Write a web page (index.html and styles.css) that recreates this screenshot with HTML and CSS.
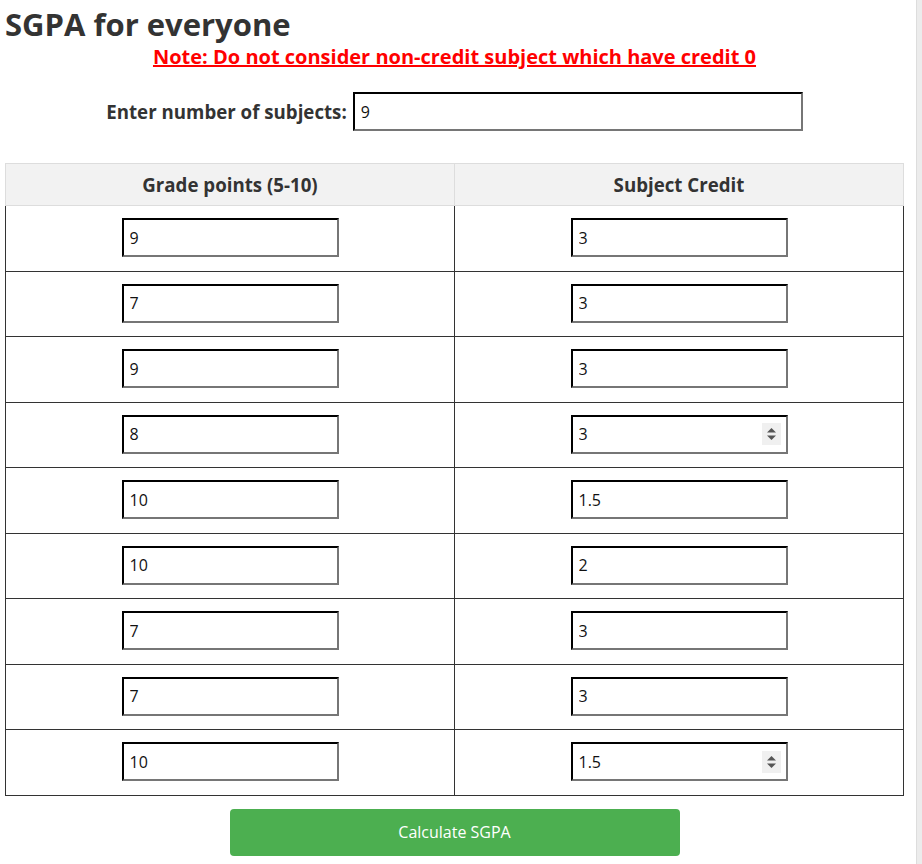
FILE: index.html
```html
<!DOCTYPE html>
<html lang="en">
<head>
    <meta charset="UTF-8">
    <meta name="viewport" content="width=device-width, initial-scale=1.0">
    <title>SGPA Calculator</title>
    <link rel="stylesheet" href="styles.css">
</head>
<body>
    <div class="container">
        <h1>SGPA for everyone</h1>
        <p class="note">Note: Do not consider non-credit subject which have credit 0</p>

        <div class="count-row">
            <label for="count">Enter number of subjects:</label>
            <input type="number" id="count" class="count-input" value="9">
        </div>

        <table class="grade-table">
            <thead>
                <tr>
                    <th>Grade points (5-10)</th>
                    <th>Subject Credit</th>
                </tr>
            </thead>
            <tbody>
                <tr><td><input type="number" value="9"></td><td><input type="number" value="3"></td></tr>
                <tr><td><input type="number" value="7"></td><td><input type="number" value="3"></td></tr>
                <tr><td><input type="number" value="9"></td><td><input type="number" value="3"></td></tr>
                <tr><td><input type="number" value="8"></td><td><input type="number" class="spin" value="3"></td></tr>
                <tr><td><input type="number" value="10"></td><td><input type="number" value="1.5"></td></tr>
                <tr><td><input type="number" value="10"></td><td><input type="number" value="2"></td></tr>
                <tr><td><input type="number" value="7"></td><td><input type="number" value="3"></td></tr>
                <tr><td><input type="number" value="7"></td><td><input type="number" value="3"></td></tr>
                <tr><td><input type="number" value="10"></td><td><input type="number" class="spin" value="1.5"></td></tr>
            </tbody>
        </table>

        <button class="calc-btn">Calculate SGPA</button>
    </div>
    <div class="scroll-track"></div>
</body>
</html>
```

FILE: styles.css
```css
body {
    font-family: "Open Sans", Arial, sans-serif;
    margin: 0;
    color: #333;
    background: white;
}
.container {
    width: 899px;
    margin-left: 5px;
    padding-top: 4px;
    text-align: center;
}
h1 {
    margin: 0;
    font-size: 31px;
    text-align: left;
    line-height: 40px;
}
.note {
    margin: 0;
    color: #f00;
    font-weight: bold;
    font-size: 20px;
    text-decoration: underline;
    line-height: 25px;
}
.count-row {
    display: flex;
    justify-content: center;
    align-items: center;
    gap: 6px;
    margin-top: 23px;
}
.count-row label {
    font-weight: bold;
    font-size: 18.7px;
}
input {
    font-family: "Open Sans", Arial, sans-serif;
    font-size: 16px;
    color: #111;
    border: 2px inset #767676;
    border-top-color: #222;
    border-left-color: #222;
    padding: 0 6px;
    height: 39px;
    width: 217px;
    box-sizing: border-box;
    background: white;
}
input::-webkit-inner-spin-button {
    -webkit-appearance: none;
    display: none;
}
input.spin {
    background: white url("data:image/svg+xml,%3Csvg xmlns='http://www.w3.org/2000/svg' width='19' height='22'%3E%3Crect width='19' height='22' fill='%23f0f0f0'/%3E%3Cpath d='M5 9.5h9L9.5 5z' fill='%23555'/%3E%3Cpath d='M5 12.5h9L9.5 17z' fill='%23555'/%3E%3C/svg%3E") no-repeat right 5px center;
}
.count-input {
    width: 450px;
}
.grade-table {
    width: 899px;
    margin-top: 32px;
    border-collapse: collapse;
}
.grade-table th {
    background-color: #f2f2f2;
    border: 1px solid #ddd;
    font-size: 18.7px;
    height: 41px;
    padding: 0;
    width: 50%;
}
.grade-table td {
    border: 1px solid #333;
    padding: 12px 0 13px;
    height: 39.5px;
}
.grade-table td input {
    display: block;
    margin: 0 auto;
}
.calc-btn {
    display: block;
    margin: 13px auto 0;
    width: 450px;
    height: 47px;
    background-color: #4caf50;
    color: white;
    border: none;
    border-radius: 4px;
    font-family: "Open Sans", Arial, sans-serif;
    font-size: 16px;
    cursor: pointer;
}
.scroll-track {
    position: fixed;
    top: 0;
    right: 0;
    width: 5px;
    height: 100%;
    background: #ececec;
    border-left: 1px solid #ddd;
}
```
